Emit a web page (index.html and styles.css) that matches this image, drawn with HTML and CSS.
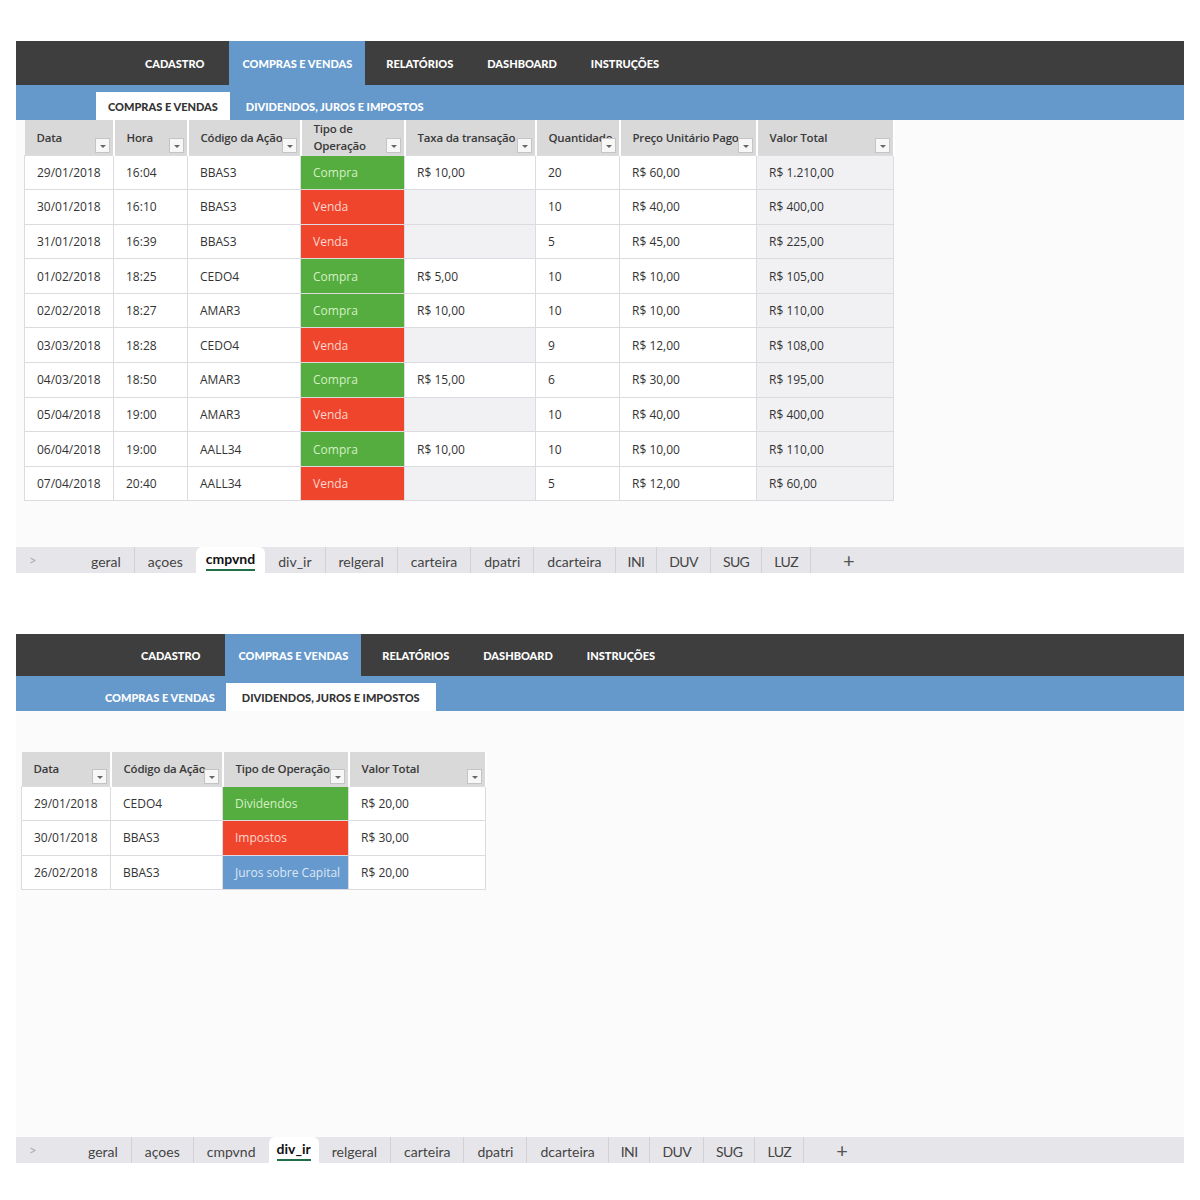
FILE: index.html
```html
<!DOCTYPE html>
<html lang="pt-BR">
<head>
  <meta charset="UTF-8">
  <title>Controle de Ações</title>
  <link rel="stylesheet" href="styles.css">
</head>
<body>

  <!-- planilha: compras e vendas -->
  <div class="sheet">
    <div class="nav">
      <a>CADASTRO</a>
      <a class="on">COMPRAS E VENDAS</a>
      <a>RELATÓRIOS</a>
      <a>DASHBOARD</a>
      <a>INSTRUÇÕES</a>
    </div>
    <div class="subnav">
      <a class="on">COMPRAS E VENDAS</a>
      <a>DIVIDENDOS, JUROS E IMPOSTOS</a>
    </div>

    <div class="grid grid-cv">
      <table>
        <tr>
          <th class="w-data">Data<span class="flt"></span></th>
          <th class="w-hora">Hora<span class="flt"></span></th>
          <th class="w-cod">Código da Ação<span class="flt"></span></th>
          <th class="w-tipo">Tipo de<br>Operação<span class="flt"></span></th>
          <th class="w-taxa">Taxa da transação<span class="flt"></span></th>
          <th class="w-qtd">Quantidade<span class="flt"></span></th>
          <th class="w-preco">Preço Unitário Pago<span class="flt"></span></th>
          <th class="w-total">Valor Total<span class="flt"></span></th>
        </tr>
        <tr><td>29/01/2018</td><td>16:04</td><td>BBAS3</td><td class="buy">Compra</td><td>R$ 10,00</td><td>20</td><td>R$ 60,00</td><td class="sum">R$ 1.210,00</td></tr>
        <tr><td>30/01/2018</td><td>16:10</td><td>BBAS3</td><td class="sell">Venda</td><td class="empty"></td><td>10</td><td>R$ 40,00</td><td class="sum">R$ 400,00</td></tr>
        <tr><td>31/01/2018</td><td>16:39</td><td>BBAS3</td><td class="sell">Venda</td><td class="empty"></td><td>5</td><td>R$ 45,00</td><td class="sum">R$ 225,00</td></tr>
        <tr><td>01/02/2018</td><td>18:25</td><td>CEDO4</td><td class="buy">Compra</td><td>R$ 5,00</td><td>10</td><td>R$ 10,00</td><td class="sum">R$ 105,00</td></tr>
        <tr><td>02/02/2018</td><td>18:27</td><td>AMAR3</td><td class="buy">Compra</td><td>R$ 10,00</td><td>10</td><td>R$ 10,00</td><td class="sum">R$ 110,00</td></tr>
        <tr><td>03/03/2018</td><td>18:28</td><td>CEDO4</td><td class="sell">Venda</td><td class="empty"></td><td>9</td><td>R$ 12,00</td><td class="sum">R$ 108,00</td></tr>
        <tr><td>04/03/2018</td><td>18:50</td><td>AMAR3</td><td class="buy">Compra</td><td>R$ 15,00</td><td>6</td><td>R$ 30,00</td><td class="sum">R$ 195,00</td></tr>
        <tr><td>05/04/2018</td><td>19:00</td><td>AMAR3</td><td class="sell">Venda</td><td class="empty"></td><td>10</td><td>R$ 40,00</td><td class="sum">R$ 400,00</td></tr>
        <tr><td>06/04/2018</td><td>19:00</td><td>AALL34</td><td class="buy">Compra</td><td>R$ 10,00</td><td>10</td><td>R$ 10,00</td><td class="sum">R$ 110,00</td></tr>
        <tr><td>07/04/2018</td><td>20:40</td><td>AALL34</td><td class="sell">Venda</td><td class="empty"></td><td>5</td><td>R$ 12,00</td><td class="sum">R$ 60,00</td></tr>
      </table>
    </div>

    <div class="tabbar">
      <span class="arrow">&gt;</span>
      <a>geral</a>
      <a>açoes</a>
      <a class="on"><span>cmpvnd</span></a>
      <a>div_ir</a>
      <a>relgeral</a>
      <a>carteira</a>
      <a>dpatri</a>
      <a>dcarteira</a>
      <a class="caps">INI</a>
      <a class="caps">DUV</a>
      <a class="caps">SUG</a>
      <a class="caps">LUZ</a>
      <span class="add">+</span>
    </div>
  </div>

  <!-- planilha: dividendos, juros e impostos -->
  <div class="sheet sheet-two">
    <div class="nav">
      <a>CADASTRO</a>
      <a class="on">COMPRAS E VENDAS</a>
      <a>RELATÓRIOS</a>
      <a>DASHBOARD</a>
      <a>INSTRUÇÕES</a>
    </div>
    <div class="subnav">
      <a>COMPRAS E VENDAS</a>
      <a class="on">DIVIDENDOS, JUROS E IMPOSTOS</a>
    </div>

    <div class="grid grid-div">
      <table>
        <tr>
          <th class="w-data">Data<span class="flt"></span></th>
          <th class="w-cod2">Código da Ação<span class="flt"></span></th>
          <th class="w-tipo2">Tipo de Operação<span class="flt"></span></th>
          <th class="w-total">Valor Total<span class="flt"></span></th>
        </tr>
        <tr><td>29/01/2018</td><td>CEDO4</td><td class="buy">Dividendos</td><td>R$ 20,00</td></tr>
        <tr><td>30/01/2018</td><td>BBAS3</td><td class="sell">Impostos</td><td>R$ 30,00</td></tr>
        <tr><td>26/02/2018</td><td>BBAS3</td><td class="jcp">Juros sobre Capital</td><td>R$ 20,00</td></tr>
      </table>
    </div>

    <div class="tabbar">
      <span class="arrow">&gt;</span>
      <a>geral</a>
      <a>açoes</a>
      <a>cmpvnd</a>
      <a class="on"><span>div_ir</span></a>
      <a>relgeral</a>
      <a>carteira</a>
      <a>dpatri</a>
      <a>dcarteira</a>
      <a class="caps">INI</a>
      <a class="caps">DUV</a>
      <a class="caps">SUG</a>
      <a class="caps">LUZ</a>
      <span class="add">+</span>
    </div>
  </div>

</body>
</html>
```

FILE: styles.css
```css
body {
  margin: 0;
  padding: 41px 16px 0;
  background-color: #ffffff;
  font-family: "Open Sans", sans-serif;
  color: #333;
}
.sheet {
  width: 1168px;
}
.sheet-two {
  margin-top: 61px;
}

/* menu principal */
.nav {
  display: flex;
  height: 44px;
  padding-left: 112px;
  background-color: #3e3e3e;
}
.sheet-two .nav {
  height: 42px;
  padding-left: 108px;
}
.nav a,
.subnav a {
  display: flex;
  align-items: center;
  padding: 0 17px;
  font-family: Lato, sans-serif;
  font-weight: 900;
  font-size: 11px;
  color: #fff;
}
.nav a.on {
  padding: 0 13px;
  margin: 0 4px 0 8px;
  background-color: #6598cb;
}

/* sub menu */
.subnav {
  display: flex;
  align-items: flex-end;
  height: 35px;
  padding-left: 80px;
  background-color: #6598cb;
}
.sheet-two .subnav {
  padding-left: 73px;
}
.subnav a {
  height: 28px;
  padding: 0 16px;
}
.subnav a.on {
  padding: 0 12px;
  background-color: #fff;
  color: #333;
}
.sheet-two .subnav a {
  padding-right: 11px;
}
.sheet-two .subnav a.on {
  padding: 0 16px;
}

/* area da planilha */
.grid {
  height: 427px;
  padding-left: 8px;
  background-color: #fbfbfb;
}
.grid-div {
  height: 385px;
  padding-top: 41px;
  padding-left: 5px;
}
table {
  border-collapse: collapse;
  table-layout: fixed;
  font-size: 12px;
}
.grid-cv table {
  width: 869px;
}
.grid-div table {
  width: 464px;
}
th {
  position: relative;
  height: 35px;
  padding: 0 12px;
  box-sizing: border-box;
  background-color: #d9d9d9;
  border-right: 2px solid #fff;
  text-align: left;
  font-size: 11.5px;
  font-weight: 600;
  letter-spacing: -0.2px;
  line-height: 17px;
  white-space: nowrap;
  overflow: hidden;
  color: #3a3a3a;
}
.grid-div th {
  height: 34px;
}
td {
  height: 34.6px;
  padding: 0 12px;
  box-sizing: border-box;
  background-color: #fff;
  border: 1px solid #dcdce0;
  white-space: nowrap;
}
td.sum,
td.empty {
  background-color: #f1f1f3;
}
td.buy {
  background-color: #55ac3f;
  color: #d4f0c4;
}
td.sell {
  background-color: #ef452d;
  color: #ffd6cb;
}
td.jcp {
  background-color: #6699cd;
  color: #dce8f6;
}

.w-data { width: 89px; }
.w-hora { width: 74px; }
.w-cod { width: 113px; }
.w-tipo { width: 104px; }
.w-taxa { width: 131px; }
.w-qtd { width: 84px; }
.w-preco { width: 137px; }
.w-total { width: 137px; }
.w-cod2 { width: 112px; }
.w-tipo2 { width: 126px; }

/* botao de filtro */
.flt {
  position: absolute;
  right: 3px;
  bottom: 2px;
  width: 13px;
  height: 13px;
  border: 1px solid #c4c4c4;
  background-color: #f7f7f7;
}
.flt::after {
  content: "";
  position: absolute;
  left: 4px;
  top: 6px;
  border-left: 3px solid transparent;
  border-right: 3px solid transparent;
  border-top: 3px solid #666;
}

/* abas */
.tabbar {
  display: flex;
  align-items: stretch;
  height: 26px;
  background-color: #e6e6ea;
  font-family: Lato, sans-serif;
  font-size: 14px;
  color: #444;
}
.tabbar .arrow {
  width: 62px;
  padding-left: 13px;
  box-sizing: border-box;
  display: flex;
  align-items: center;
  color: #aaa;
  font-size: 13px;
}
.sheet-two .tabbar .arrow {
  width: 59px;
}
.tabbar a {
  display: flex;
  align-items: center;
  padding: 3px 13px 0;
  border-left: 1px solid #d2d2d6;
}
.tabbar a.caps {
  padding: 3px 12px 0;
  letter-spacing: -0.6px;
}
.tabbar a:nth-of-type(1) {
  border-left: none;
}
.tabbar a.on {
  padding: 0 10px;
  border-left: none;
  border-radius: 6px 6px 0 0;
  background-color: #fff;
  font-weight: bold;
  color: #111;
}
.sheet-two .tabbar a.on {
  padding: 0 8px;
}
.tabbar a.on span {
  padding-bottom: 2px;
  border-bottom: 2px solid #1f6e48;
}
.tabbar a.on + a {
  border-left: none;
}
.tabbar a:nth-last-of-type(1) {
  border-right: 1px solid #d2d2d6;
}
.tabbar .add {
  display: flex;
  align-items: center;
  margin-left: 32px;
  font-size: 20px;
  color: #555;
}
```
